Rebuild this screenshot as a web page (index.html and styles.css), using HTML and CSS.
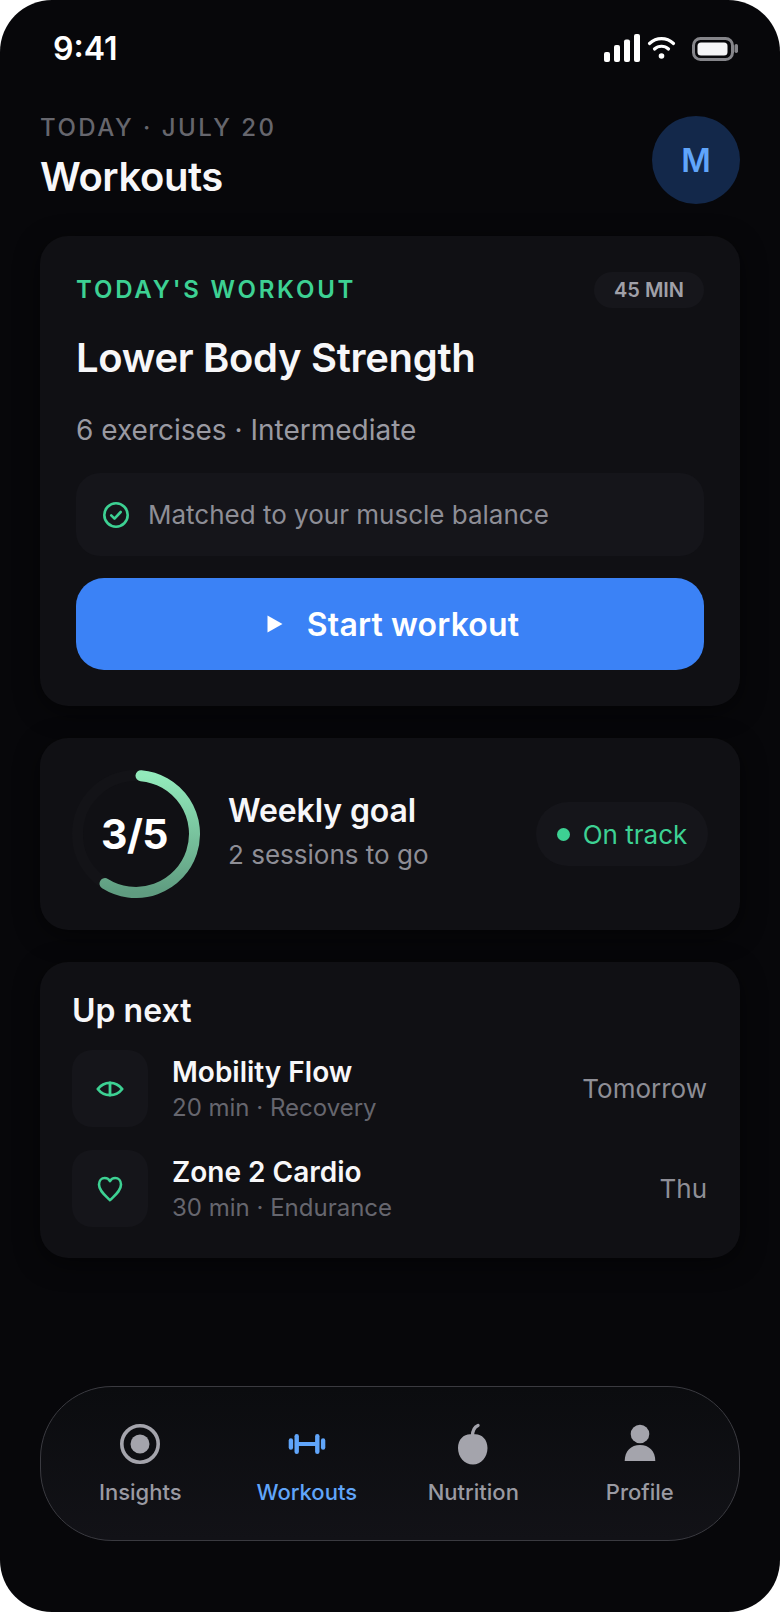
FILE: index.html
```html
<!DOCTYPE html>
<html lang="en">
<head>
<meta charset="utf-8">
<title>Workouts</title>
<link rel="stylesheet" href="styles.css">
</head>
<body>
<div class="phone">
  <div class="status">
    <span class="time">9:41</span>
    <svg class="status-icons" width="136" height="30" viewBox="0 0 136 30">
      <rect x="0" y="18" width="6" height="10" rx="2" fill="#fff"/>
      <rect x="10" y="11" width="6" height="17" rx="2" fill="#fff"/>
      <rect x="20" y="5.5" width="6" height="22.5" rx="2" fill="#fff"/>
      <rect x="30" y="0" width="6" height="28" rx="2" fill="#fff"/>
      <path d="M45.5 9.5C52.5 3 62.5 3 69.5 9.5" fill="none" stroke="#fff" stroke-width="3.2" stroke-linecap="round"/>
      <path d="M50.5 15C54.5 11.3 60.5 11.3 64.5 15" fill="none" stroke="#fff" stroke-width="3.2" stroke-linecap="round"/>
      <circle cx="57.5" cy="22" r="2.8" fill="#fff"/>
      <rect x="89.5" y="4.5" width="39" height="21" rx="7" fill="none" stroke="#85858a" stroke-width="3"/>
      <rect x="93.5" y="8.5" width="30" height="13" rx="3.5" fill="#f4f4f6"/>
      <rect x="130.5" y="10" width="3.5" height="9" rx="1.7" fill="#85858a"/>
    </svg>
  </div>

  <header class="header">
    <div>
      <div class="eyebrow">TODAY · JULY 20</div>
      <h1 class="page-title">Workouts</h1>
    </div>
    <div class="avatar">M</div>
  </header>

  <section class="card hero">
    <div class="hero-top">
      <span class="hero-label">TODAY'S WORKOUT</span>
      <span class="duration">45 MIN</span>
    </div>
    <h2 class="hero-title">Lower Body Strength</h2>
    <p class="hero-sub">6 exercises · Intermediate</p>
    <div class="match">
      <svg width="28" height="28" viewBox="0 0 28 28" fill="none" stroke="#3dd193" stroke-width="2.6" stroke-linecap="round" stroke-linejoin="round">
        <circle cx="14" cy="14" r="11.7"/>
        <path d="M9.2 14.4l3.3 3.2 6.2-6.6"/>
      </svg>
      <span>Matched to your muscle balance</span>
    </div>
    <button class="start">
      <svg width="16" height="18" viewBox="0 0 16 18"><path d="M0.5 0.5L15.5 9L0.5 17.5Z" fill="#fff"/></svg>
      <span>Start workout</span>
    </button>
  </section>

  <section class="card goal">
    <div class="ring">
      <svg width="128" height="128" viewBox="0 0 128 128" fill="none">
        <defs>
          <linearGradient id="ringGrad" x1="0" y1="0" x2="0" y2="1">
            <stop offset="0" stop-color="#92eabb"/>
            <stop offset="1" stop-color="#5f9c80"/>
          </linearGradient>
        </defs>
        <circle cx="64" cy="64" r="58.5" stroke="#131317" stroke-width="11"/>
        <path d="M69 5.7A58.5 58.5 0 1 1 33 113.6" stroke="url(#ringGrad)" stroke-width="11" stroke-linecap="round"/>
      </svg>
      <span class="ring-text">3/5</span>
    </div>
    <div class="goal-text">
      <div class="goal-title">Weekly goal</div>
      <div class="goal-sub">2 sessions to go</div>
    </div>
    <div class="track"><i class="dot"></i><span>On track</span></div>
  </section>

  <section class="card next">
    <h3 class="next-title">Up next</h3>
    <div class="rows">
      <div class="row">
        <div class="row-icon">
          <svg width="28" height="18" viewBox="0 0 28 18" fill="none" stroke="#3dd193" stroke-width="2.8" stroke-linecap="round" stroke-linejoin="round">
            <path d="M1.8 9C8 .8 20 .8 26.200 9C20 17.200 8 17.200 1.8 9Z"/>
            <path d="M14 3V15"/>
          </svg>
        </div>
        <div class="row-text">
          <div class="row-title">Mobility Flow</div>
          <div class="row-sub">20 min · Recovery</div>
        </div>
        <span class="row-when">Tomorrow</span>
      </div>
      <div class="row">
        <div class="row-icon">
          <svg class="heart" width="26" height="26" viewBox="0 0 26 26" fill="none" stroke="#3dd193" stroke-width="2.6" stroke-linejoin="round">
            <path d="M13 24.200C8.500 19.500 2 15 2 8.500C2 4.800 4.500 2 7.800 2C10 2 12 3.200 13 5.200C14 3.200 16 2 18.200 2C21.500 2 24 4.800 24 8.500C24 15 17.500 19.500 13 24.200Z"/>
          </svg>
        </div>
        <div class="row-text">
          <div class="row-title">Zone 2 Cardio</div>
          <div class="row-sub">30 min · Endurance</div>
        </div>
        <span class="row-when">Thu</span>
      </div>
    </div>
  </section>

  <nav class="tabbar">
    <div class="tab">
      <svg width="42" height="42" viewBox="0 0 42 42" fill="none">
        <circle cx="21" cy="21" r="18.200" stroke="#a4a4ac" stroke-width="3.6"/>
        <circle cx="21" cy="21" r="9.500" fill="#a4a4ac"/>
      </svg>
      <span>Insights</span>
    </div>
    <div class="tab active">
      <svg width="42" height="42" viewBox="0 0 42 42" fill="none" stroke="#60a5fa" stroke-linecap="round">
        <path d="M4.900 17.500V24.500" stroke-width="4.400"/>
        <path d="M10.700 13.200V28.800" stroke-width="4.400"/>
        <path d="M31.300 13.200V28.800" stroke-width="4.400"/>
        <path d="M37.100 17.500V24.500" stroke-width="4.400"/>
        <path d="M10.700 21H31.300" stroke-width="3.800"/>
      </svg>
      <span>Workouts</span>
    </div>
    <div class="tab">
      <svg width="42" height="42" viewBox="0 0 42 42" fill="none">
        <path d="M20.800 11.500C28 9.800 35.500 15 35.500 25C35.500 34 29 41.500 21 41.500C12.500 41.500 6 34 6 25C6 15 13.500 9.800 20.800 11.500Z" fill="#a4a4ac"/>
        <path d="M20.500 13C20.500 7.500 22.500 4 26 2.500" stroke="#a4a4ac" stroke-width="3.400" stroke-linecap="round"/>
      </svg>
      <span>Nutrition</span>
    </div>
    <div class="tab">
      <svg width="42" height="42" viewBox="0 0 42 42" fill="none">
        <circle cx="21" cy="11" r="9.300" fill="#a4a4ac"/>
        <path d="M5.700 38C5.700 28 12 22 21 22C30 22 36.300 28 36.300 38Z" fill="#a4a4ac"/>
      </svg>
      <span>Profile</span>
    </div>
  </nav>
</div>
</body>
</html>
```
FILE: styles.css
```css
* { box-sizing: border-box; }
html, body { margin: 0; padding: 0; background: #fff; }
body { font-family: Inter, "Liberation Sans", sans-serif; }

.phone {
  width: 780px;
  height: 1612px;
  border-radius: 52px;
  background: #07070a;
  overflow: hidden;
  padding: 0 40px;
  display: flex;
  flex-direction: column;
  color: #fff;
}

.status {
  height: 114px;
  padding: 34px 0 0 13px;
  display: flex;
  justify-content: space-between;
  align-items: flex-start;
}
.time { font-size: 32px; line-height: 30px; font-weight: 600; }
.status-icons { display: block; }

.header { display: flex; justify-content: space-between; align-items: flex-start; }
.eyebrow {
  font-size: 24px;
  line-height: 28px;
  font-weight: 500;
  letter-spacing: 2.5px;
  color: #66666d;
}
.page-title {
  margin: 11px 0 0;
  font-size: 40px;
  line-height: 48px;
  font-weight: 600;
  letter-spacing: -0.4px;
  color: #f7f7f9;
}
.avatar {
  width: 88px;
  height: 88px;
  margin-top: 2px;
  border-radius: 50%;
  background: #13284a;
  color: #60a5fa;
  font-size: 32px;
  font-weight: 600;
  display: flex;
  align-items: center;
  justify-content: center;
}

.card {
  background: #101014;
  border-radius: 28px;
  box-shadow: 0 6px 24px rgba(0, 0, 0, 0.5);
}

.hero { margin-top: 32px; padding: 36px; }
.hero-top { display: flex; justify-content: space-between; align-items: center; }
.hero-label {
  font-size: 24px;
  line-height: 30px;
  font-weight: 600;
  letter-spacing: 2.8px;
  color: #3dd193;
}
.duration {
  width: 110px;
  height: 36px;
  border-radius: 18px;
  background: #16161b;
  color: #a0a0a8;
  font-size: 20px;
  font-weight: 600;
  display: flex;
  align-items: center;
  justify-content: center;
}
.hero-title {
  margin: 26px 0 0;
  font-size: 40px;
  line-height: 48px;
  font-weight: 600;
  letter-spacing: -0.32px;
  color: #f7f7f9;
}
.hero-sub {
  margin: 30px 0 0;
  font-size: 28px;
  line-height: 36px;
  color: #9a9aa2;
}
.match {
  margin-top: 25px;
  height: 83px;
  padding: 0 26px;
  border-radius: 24px;
  background: #15151a;
  display: flex;
  align-items: center;
  gap: 18px;
  color: #8e8e96;
  font-size: 26px;
}
.match svg { flex: none; }
.start {
  margin-top: 22px;
  width: 100%;
  height: 92px;
  border: 0;
  padding: 0 0 0 6px;
  border-radius: 28px;
  background: #3b82f6;
  color: #fff;
  font-family: inherit;
  font-size: 32px;
  font-weight: 600;
  letter-spacing: 0.16px;
  display: flex;
  align-items: center;
  justify-content: center;
  gap: 24px;
}

.goal {
  margin-top: 32px;
  height: 192px;
  padding: 0 32px;
  display: flex;
  align-items: center;
  gap: 28px;
}
.ring {
  position: relative;
  width: 128px;
  height: 128px;
  flex: none;
  display: flex;
  align-items: center;
  justify-content: center;
}
.ring svg { position: absolute; inset: 0; }
.ring-text { font-size: 41px; font-weight: 700; letter-spacing: -0.6px; margin-right: 3px; position: relative; }
.goal-text { margin-bottom: 4px; }
.goal-title { font-size: 32px; line-height: 40px; font-weight: 600; letter-spacing: -0.1px; color: #f7f7f9; }
.goal-sub { margin-top: 6px; font-size: 26px; line-height: 36px; color: #8e8e96; }
.track {
  margin-left: auto;
  width: 172px;
  height: 64px;
  border-radius: 32px;
  background: #15151a;
  color: #3dd193;
  font-size: 26px;
  display: flex;
  align-items: center;
  justify-content: center;
  gap: 13px;
}
.dot { width: 13px; height: 13px; border-radius: 50%; background: #3dd193; }

.next { margin-top: 32px; padding: 29px 33px 31px 32px; }
.next-title { margin: 0; font-size: 32px; line-height: 40px; font-weight: 600; color: #f7f7f9; }
.rows { margin-top: 19px; display: flex; flex-direction: column; gap: 23px; }
.row { display: flex; align-items: center; gap: 24px; }
.row-icon {
  width: 76px;
  height: 77px;
  border-radius: 20px;
  background: #15151a;
  display: flex;
  align-items: center;
  justify-content: center;
  flex: none;
}
.row-title { font-size: 28px; line-height: 36px; font-weight: 600; color: #f7f7f9; }
.row-sub { margin-top: 2px; font-size: 24px; line-height: 32px; color: #66666e; }
.row-when { margin-left: auto; font-size: 26px; color: #8e8e96; }

.tabbar {
  margin-top: auto;
  margin-bottom: 71px;
  height: 155px;
  border-radius: 72px;
  border: 1px solid #3a3a40;
  background: linear-gradient(180deg, #0b0c0f, #121217);
  padding: 0 16px;
  display: grid;
  grid-template-columns: repeat(4, 1fr);
}
.tab {
  padding-top: 36px;
  display: flex;
  flex-direction: column;
  align-items: center;
  gap: 12px;
  font-size: 22px;
  line-height: 30px;
  font-weight: 500;
  color: #9a9aa2;
}
.tab.active { color: #60a5fa; }
```
